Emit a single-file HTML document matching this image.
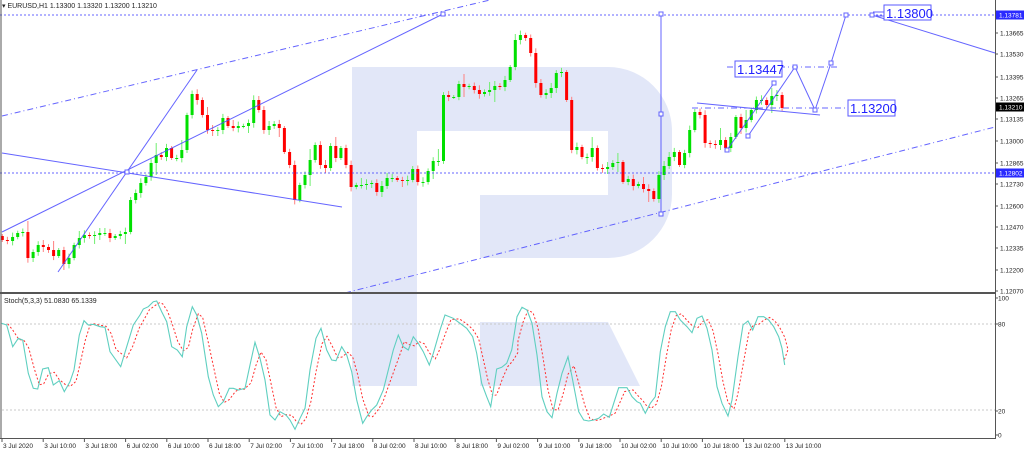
<!DOCTYPE html>
<html><head><meta charset="utf-8"><style>
html,body{margin:0;padding:0;background:#fff;width:1024px;height:453px;overflow:hidden}
svg{display:block}
text{font-family:"Liberation Sans",sans-serif}
</style></head><body>
<svg id="s" width="1024" height="453" viewBox="0 0 1024 453" xmlns="http://www.w3.org/2000/svg">
<path d="M352,67 H608 A64,64 0 0 1 672,131 V194 A64,64 0 0 1 608,258 H480 V195 H608 V131 H417 V386 H352 Z" fill="#e2e7f8"/>
<path d="M480,322 H608 L640,386 H480 Z" fill="#e2e7f8"/>
<g id="candles"></g>
<g stroke="#4a4aff" stroke-width="1" fill="none" opacity="0.85">
<line x1="0" y1="15" x2="995" y2="15" stroke-dasharray="2,2"/>
<line x1="0" y1="173" x2="995" y2="173" stroke-dasharray="2,2"/>
<line x1="2" y1="116" x2="490" y2="0" stroke-dasharray="6,3,1,3"/>
<line x1="345" y1="293" x2="995" y2="127" stroke-dasharray="6,3,1,3"/>
<line x1="58" y1="272" x2="197" y2="70"/>
<line x1="2" y1="232" x2="443" y2="14"/>
<line x1="2" y1="153" x2="342" y2="207"/>
<line x1="661" y1="14" x2="661" y2="214"/>
<line x1="697" y1="103" x2="820" y2="115"/>
<line x1="692" y1="108" x2="846" y2="108" stroke-dasharray="6,3,1,3"/>
<line x1="727" y1="67" x2="840" y2="67" stroke-dasharray="6,3,1,3"/>
<polyline points="727,150 774,83"/>
<polyline points="748,136 795,67 815,110 831,63 846,15"/>
<polyline points="872,15 995,53"/>
<line x1="873" y1="12" x2="884" y2="12"/>
<line x1="873" y1="16" x2="884" y2="16"/>
<g fill="#fff">
<rect x="441" y="12" width="4" height="4"/>
<rect x="659" y="112" width="4" height="4"/>
<rect x="659" y="212" width="4" height="4"/>
<rect x="659" y="12" width="4" height="4"/>
<rect x="725" y="148" width="4" height="4"/>
<rect x="746" y="134" width="4" height="4"/>
<rect x="772" y="81" width="4" height="4"/>
<rect x="793" y="65" width="4" height="4"/>
<rect x="813" y="108" width="4" height="4"/>
<rect x="829" y="61" width="4" height="4"/>
<rect x="844" y="13" width="4" height="4"/>
<rect x="870" y="13" width="4" height="4"/>
<rect x="125" y="170" width="4" height="4"/>
</g>
</g>
<g font-size="13" fill="#2020ff">
<rect x="735" y="61" width="47" height="16" fill="#fff" stroke="#5a5aff"/>
<text x="737" y="74">1.13447</text>
<rect x="884" y="5" width="47" height="15" fill="#fff" stroke="#5a5aff"/>
<text x="886" y="18">1.13800</text>
<rect x="848" y="100" width="47" height="16" fill="#fff" stroke="#5a5aff"/>
<text x="850" y="113">1.13200</text>
</g>
<line x1="2" y1="324" x2="995" y2="324" stroke="#c8c8c8" stroke-dasharray="2,2"/>
<line x1="2" y1="410" x2="995" y2="410" stroke="#c8c8c8" stroke-dasharray="2,2"/>
<polyline id="st2" fill="none" stroke="#ff3030" stroke-width="1" stroke-dasharray="2,2"/>
<polyline id="st1" fill="none" stroke="#5fcfc0" stroke-width="1.1"/>
<text x="4" y="303" font-size="7" fill="#222">Stoch(5,3,3) 51.0830 65.1339</text>
<g fill="none" stroke="#555">
<line x1="1" y1="0" x2="1" y2="439" stroke-width="1"/>
<line x1="995.5" y1="0" x2="995.5" y2="439" stroke-width="1"/>
<line x1="0" y1="293" x2="996" y2="293" stroke-width="2"/>
<line x1="0" y1="438.5" x2="996" y2="438.5" stroke-width="1"/>
</g>
<text x="2" y="8" font-size="7" fill="#222">▾ EURUSD,H1  1.13300 1.13320 1.13200 1.13210</text>
<g id="axis" font-size="6.5" fill="#222"></g>
</svg>
<script>
(function(){
var NS="http://www.w3.org/2000/svg",svg=document.getElementById('s');
function el(t,a,p){var e=document.createElementNS(NS,t);for(var k in a)e.setAttribute(k,a[k]);(p||svg).appendChild(e);return e;}
var c=[240,241,237,233,232,258,252,245,247,250,256,250,264,258,245,238,235,236,235,233,233,238,236,234,232,200,193,183,177,163,155,157,148,158,158,150,115,94,100,115,130,131,130,118,126,128,126,126,123,100,110,130,126,124,128,152,165,200,185,175,160,145,165,168,146,158,148,165,
187,185,185,184,183,192,186,178,178,180,181,180,169,182,182,171,161,161,95,97,97,84,87,86,90,94,92,90,86,87,80,67,40,35,38,53,83,95,93,88,73,72,100,150,147,157,157,148,168,169,167,163,162,182,179,186,184,189,191,199,
175,166,157,152,165,153,130,112,115,143,144,145,140,148,137,117,128,120,110,100,100,105,96,95,108];
var g=document.getElementById('candles');
var o=236;
for(var i=0;i<c.length;i++){
 var x=2.3+i*5.13, cl=c[i], up=cl<=o;
 var tp=Math.min(o,cl), bt=Math.max(o,cl);
 var ext=((i*37)%11)/2;
 var hi=tp-2-((i*7)%5==0?ext*2:ext*0.6), lo=bt+2+((i*13)%6==0?ext*2:ext*0.6);
 var col=up?'#00e000':'#ff0000', wc=up?'#70ee70':'#ff8080';
 el('line',{x1:x.toFixed(1),x2:x.toFixed(1),y1:hi,y2:lo,stroke:wc,'stroke-width':1},g);
 el('rect',{x:(x-1.5).toFixed(1),y:tp,width:3,height:Math.max(1,bt-tp),fill:col},g);
 o=cl;
}
var A=[[5,100],[20,105],[38,170],[55,145],[68,150],[85,250],[100,295],[113,297],[128,237],[145,233],[160,285],[178,272],[193,305],[210,275],[222,240],[238,135],[252,92],[265,105],[280,103],[300,110],[315,112],[330,185],[362,230],[380,170],[400,105],[420,75],[430,57],[445,50],[460,35],[470,33],[485,65],[500,95],[515,170],[532,180],[547,200],[560,110],[577,50],[590,75],[605,130],[625,260],[640,315],[655,350],[670,335],[688,295],[700,295],[715,300],[735,295],[750,225],[765,157],[780,205],[795,270],[810,375],[825,390],[840,365],[858,375],[870,390],[885,418],[900,385],[915,355],[930,240],[948,145],[963,115],[980,180],[995,210],[1008,212],[1025,170],[1040,195],[1055,245],[1070,330],[1088,400],[1100,380],[1115,360],[1130,345],[1150,300],[1180,180],[1195,135],[1210,170],[1225,180],[1240,140],[1255,160],[1270,185],[1288,225],[1300,190],[1320,120],[1335,75],[1360,85],[1380,100],[1400,115],[1418,140],[1430,190],[1445,280],[1460,320],[1472,350],[1490,237],[1505,232],[1520,220],[1535,180]];
var B=[[0,175],[15,80],[30,52],[45,60],[60,100],[75,195],[90,320],[105,365],[120,383],[135,310],[150,250],[168,200],[180,260],[200,365],[215,390],[230,393],[245,390],[260,385],[275,372],[292,382],[305,340],[320,293],[345,293],[360,320],[375,335],[385,340],[400,370],[415,340],[430,320],[445,185],[460,110],[475,65],[490,65],[505,90],[525,110],[540,128],[555,85],[570,78],[585,115],[600,180],[615,290],[630,340],[648,378],[660,330],[678,200],[693,105],[708,93],[722,120],[738,80],[755,80],[770,90],[785,110],[800,140],[810,175],[818,225]];
var pts=[];A.forEach(function(p){pts.push([p[0]/3,290+p[1]/3]);});B.forEach(function(p){pts.push([512+p[0]/3,290+p[1]/3]);});
document.getElementById('st1').setAttribute('points',pts.map(function(p){return p[0].toFixed(1)+','+p[1].toFixed(1)}).join(' '));
var r=[];for(var i=0;i<pts.length;i++){var a=pts[Math.max(0,i-1)],b=pts[i],d=pts[Math.min(pts.length-1,i+1)];r.push([b[0]+6,(a[1]+b[1]*2+d[1])/4]);}
r[r.length-1][0]=Math.min(r[r.length-1][0],784);
document.getElementById('st2').setAttribute('points',r.map(function(p){return p[0].toFixed(1)+','+p[1].toFixed(1)}).join(' '));
var ax=document.getElementById('axis');
var L=[["1.13665",33],["1.13530",54],["1.13395",77],["1.13265",98],["1.13135",119],["1.13000",141],["1.12865",163],["1.12730",184],["1.12600",206],["1.12470",227],["1.12335",248],["1.12200",270],["1.12070",291]];
L.forEach(function(l){el('line',{x1:995,x2:998,y1:l[1],y2:l[1],stroke:'#555'},ax);var t=el('text',{x:1000,y:l[1]+2.5},ax);t.textContent=l[0];});
[["1.13781",15,"#2a2aff"],["1.13210",107,"#000"],["1.12802",173,"#2a2aff"]].forEach(function(l){el('rect',{x:996,y:l[1]-4.5,width:28,height:9,fill:l[2]},ax);var t=el('text',{x:999,y:l[1]+2.5,fill:'#fff'},ax);t.textContent=l[0];});
[["100",298],["80",324],["20",411],["0",435]].forEach(function(l){el('line',{x1:995,x2:998,y1:l[1],y2:l[1],stroke:'#555'},ax);var t=el('text',{x:998,y:l[1]+2.5},ax);t.textContent=l[0];});
var T=["3 Jul 2020","3 Jul 10:00","3 Jul 18:00","6 Jul 02:00","6 Jul 10:00","6 Jul 18:00","7 Jul 02:00","7 Jul 10:00","7 Jul 18:00","8 Jul 02:00","8 Jul 10:00","8 Jul 18:00","9 Jul 02:00","9 Jul 10:00","9 Jul 18:00","10 Jul 02:00","10 Jul 10:00","10 Jul 18:00","13 Jul 02:00","13 Jul 10:00"];
T.forEach(function(s,i){var x=2+i*41.2;el('line',{x1:x,x2:x,y1:439,y2:442,stroke:'#555'},ax);var t=el('text',{x:x+1,y:448},ax);t.textContent=s;});
})();
</script>
</body></html>
